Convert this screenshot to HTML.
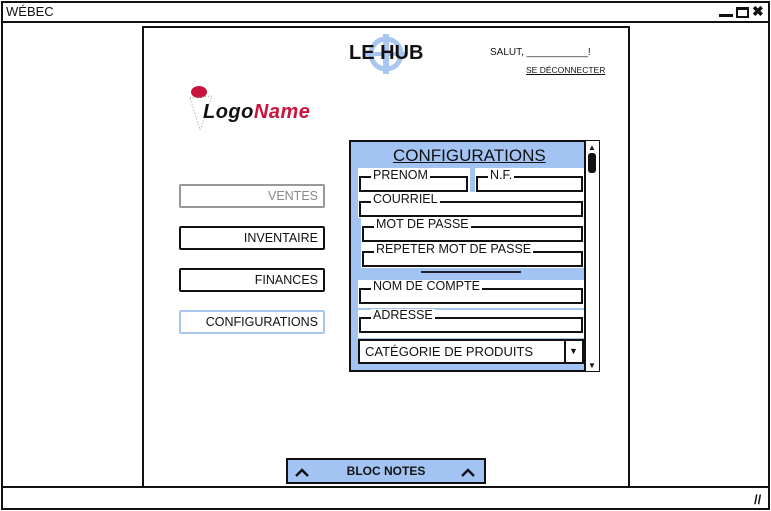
<!DOCTYPE html>
<html><head><meta charset="utf-8"><style>
*{margin:0;padding:0;box-sizing:border-box}
body{width:771px;height:511px;background:#fff;position:relative;overflow:hidden;font-family:"Liberation Sans",sans-serif;color:#111}
.a{position:absolute}
.btn{position:absolute;left:179px;width:146px;height:24px;border:2px solid #111;border-radius:2px;font-size:12.5px;text-align:right;padding-right:5px;line-height:20px}
.fld{position:absolute;height:16px;border:2px solid #111;border-top:none;background:#fff}
.lbl{position:absolute;font-size:12.5px;line-height:13px;background:transparent}
.wb{position:absolute;background:#fff}
</style></head><body>
<div class="a" style="left:1px;top:1px;width:769px;height:509px;border:2px solid #111"></div>
<div class="a" style="left:6px;top:4px;font-size:13px">WÉBEC</div>
<div class="a" style="left:1px;top:21px;width:769px;height:2px;background:#111"></div>
<div class="a" style="left:719px;top:14px;width:14px;height:3px;background:#111"></div>
<div class="a" style="left:736px;top:7px;width:13px;height:11px;border:2px solid #111;border-top-width:3px"></div>
<div class="a" style="left:752px;top:3px;font-size:14px;font-weight:bold">✖</div>
<div class="a" style="left:1px;top:486px;width:769px;height:2px;background:#111"></div>
<div class="a" style="left:754px;top:492px;font-size:13px;font-weight:bold">//</div>
<div class="a" style="left:142px;top:26px;width:488px;height:461px;border:2px solid #111;border-bottom:none"></div>
<svg class="a" style="left:364px;top:32px" width="44" height="44"><circle cx="22" cy="22" r="15" fill="none" stroke="#a9c6ef" stroke-width="5"/><line x1="22" y1="2" x2="22" y2="42" stroke="#a9c6ef" stroke-width="6"/><line x1="2" y1="22" x2="42" y2="22" stroke="#a9c6ef" stroke-width="4"/></svg>
<div class="a" style="left:349px;top:42px;font-size:20px;font-weight:bold">LE HUB</div>
<div class="a" style="left:490px;top:47px;font-size:10px">SALUT, ___________!</div>
<div class="a" style="left:526px;top:65px;font-size:8.5px;text-decoration:underline">SE DÉCONNECTER</div>
<svg class="a" style="left:188px;top:84px" width="30" height="50"><ellipse cx="11" cy="8" rx="8" ry="6" fill="#c8143c"/><path d="M2 14 L24 12 L12 46 Z" fill="none" stroke="#999" stroke-dasharray="1 2"/></svg>
<div class="a" style="left:203px;top:101px;font-size:20px;font-style:italic;font-weight:bold;letter-spacing:0.5px">Logo<span style="color:#c8143c">Name</span></div>
<div class="btn" style="top:184px;border-color:#999;color:#888">VENTES</div>
<div class="btn" style="top:226px">INVENTAIRE</div>
<div class="btn" style="top:268px">FINANCES</div>
<div class="btn" style="top:310px;border-color:#a9c6ef">CONFIGURATIONS</div>
<div class="a" style="left:349px;top:140px;width:251px;height:232px;border:2px solid #111;background:#a3c4f3"></div>
<div class="a" style="left:584px;top:141px;width:15px;height:230px;background:#fff;border-left:2px solid #111"></div>
<div class="a" style="left:588px;top:143px;font-size:8px">▲</div>
<div class="a" style="left:588px;top:153px;width:8px;height:20px;background:#111;border-radius:3px"></div>
<div class="a" style="left:588px;top:361px;font-size:8px">▼</div>
<div class="a" style="left:393px;top:146px;font-size:17px;text-decoration:underline">CONFIGURATIONS</div>
<div class="wb" style="left:358px;top:168px;width:112px;height:24px"></div>
<div class="wb" style="left:475px;top:168px;width:109px;height:24px"></div>
<div class="wb" style="left:358px;top:192px;width:226px;height:26px"></div>
<div class="wb" style="left:361px;top:218px;width:223px;height:50px"></div>
<div class="wb" style="left:358px;top:280px;width:226px;height:28px"></div>
<div class="wb" style="left:358px;top:310px;width:226px;height:28px"></div>
<div class="fld" style="left:359px;top:176px;width:109px;border-top:2px solid #111"></div><div class="lbl" style="left:371px;top:169px;background:#fff;padding:0 2px">PRENOM</div>
<div class="fld" style="left:476px;top:176px;width:107px;border-top:2px solid #111"></div><div class="lbl" style="left:488px;top:169px;background:#fff;padding:0 2px">N.F.</div>
<div class="fld" style="left:359px;top:201px;width:224px;border-top:2px solid #111"></div><div class="lbl" style="left:371px;top:193px;background:#fff;padding:0 2px">COURRIEL</div>
<div class="fld" style="left:362px;top:226px;width:221px;border-top:2px solid #111"></div><div class="lbl" style="left:374px;top:218px;background:#fff;padding:0 2px">MOT DE PASSE</div>
<div class="fld" style="left:362px;top:251px;width:221px;border-top:2px solid #111"></div><div class="lbl" style="left:374px;top:243px;background:#fff;padding:0 2px">REPETER MOT DE PASSE</div>
<div class="a" style="left:421px;top:271px;width:100px;height:2px;background:#223"></div>
<div class="fld" style="left:359px;top:288px;width:224px;border-top:2px solid #111"></div><div class="lbl" style="left:371px;top:280px;background:#fff;padding:0 2px">NOM DE COMPTE</div>
<div class="fld" style="left:359px;top:317px;width:224px;border-top:2px solid #111"></div><div class="lbl" style="left:371px;top:309px;background:#fff;padding:0 2px">ADRESSE</div>
<div class="a" style="left:358px;top:339px;width:226px;height:25px;border:2px solid #111;background:#fff;font-size:13px;line-height:21px;padding-left:5px">CATÉGORIE DE PRODUITS</div>
<div class="a" style="left:564px;top:339px;width:2px;height:25px;background:#111"></div>
<div class="a" style="left:569px;top:346px;font-size:9px">▼</div>
<div class="a" style="left:286px;top:458px;width:200px;height:26px;border:2px solid #111;background:#a3c4f3;font-size:12px;font-weight:bold;text-align:center;line-height:22px">BLOC NOTES</div>
<svg class="a" style="left:294px;top:466px" width="184" height="12"><path d="M2 10 L8 4 L14 10" fill="none" stroke="#111" stroke-width="2.5"/><path d="M168 10 L174 4 L180 10" fill="none" stroke="#111" stroke-width="2.5"/></svg>
</body></html>
